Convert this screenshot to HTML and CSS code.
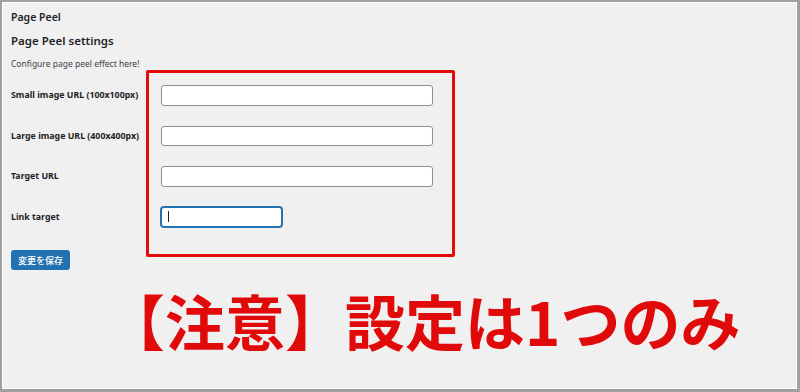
FILE: index.html
```html
<!DOCTYPE html>
<html lang="ja">
<head>
    <meta charset="UTF-8">
    <title>Page Peel</title>
    <link rel="stylesheet" href="styles.css">
</head>
<body>
    <div class="frame">
        <div class="wrap">
            <h1>Page Peel</h1>
            <h2>Page Peel settings</h2>
            <p class="intro">Configure page peel effect here!</p>

            <!-- Settings form -->
            <div class="form-table">
                <label class="row-label">Small image URL (100x100px)</label>
                <input class="text-input" type="text">

                <label class="row-label">Large image URL (400x400px)</label>
                <input class="text-input" type="text">

                <label class="row-label">Target URL</label>
                <input class="text-input" type="text">

                <label class="row-label">Link target</label>
                <div class="text-input short focused"><span class="caret"></span></div>
            </div>

            <button class="save-btn">変更を保存</button>

            <div class="notice">【注意】設定は1つのみ</div>
        </div>

        <!-- Annotation box -->
        <div class="highlight"></div>
    </div>
</body>
</html>
```

FILE: styles.css
```css
* {
    margin: 0;
    padding: 0;
    box-sizing: border-box;
}

body {
    background-color: #ffffff;
    font-family: 'Noto Sans', 'Noto Sans CJK JP', sans-serif;
    color: #1d2327;
}

.frame {
    position: relative;
    width: 800px;
    height: 392px;
    background-color: #f0f0f0;
    border: 2px solid #a0a0a0;
    border-right-width: 3px;
    border-bottom-width: 3px;
    box-shadow: inset 0 0 0 1px #ffffff;
    overflow: hidden;
}

.wrap {
    padding: 8px 0 0 9px;
}

h1 {
    font-size: 10.5px;
    font-weight: 600;
    line-height: 14px;
}

h2 {
    margin-top: 10px;
    font-size: 11.5px;
    font-weight: 600;
    line-height: 14px;
}

.intro {
    margin-top: 10px;
    font-size: 8.5px;
    line-height: 12px;
    color: #3c434a;
}

/* Form rows */
.form-table {
    display: grid;
    grid-template-columns: 150px 1fr;
    row-gap: 20px;
    margin-top: 15px;
    align-items: center;
}

.row-label {
    font-size: 8.8px;
    font-weight: 700;
    line-height: 12px;
}

.text-input {
    width: 272px;
    height: 20.5px;
    background-color: #ffffff;
    border: 1px solid #8c8f94;
    border-radius: 3px;
    outline: none;
}

.text-input.short {
    width: 121px;
    display: flex;
    align-items: center;
    padding-left: 6px;
}

.text-input.focused {
    border-color: #2271b1;
    box-shadow: 0 0 0 1px #2271b1;
}

.caret {
    width: 1px;
    height: 11px;
    background-color: #1d2327;
}

.save-btn {
    display: block;
    margin-top: 23px;
    width: 59px;
    height: 20px;
    background-color: #2271b1;
    color: #ffffff;
    border: none;
    border-radius: 3px;
    font-family: 'Noto Sans CJK JP', sans-serif;
    font-size: 9px;
    font-weight: 500;
}

.notice {
    margin-top: 20px;
    padding-left: 94px;
    font-family: 'Noto Sans CJK JP', sans-serif;
    font-size: 60px;
    font-weight: 700;
    line-height: 60px;
    color: #e10a0a;
    white-space: nowrap;
}

/* Red annotation */
.highlight {
    position: absolute;
    left: 144px;
    top: 68px;
    width: 309px;
    height: 187px;
    border: 3px solid #e50b0b;
    border-radius: 2px;
}
```
